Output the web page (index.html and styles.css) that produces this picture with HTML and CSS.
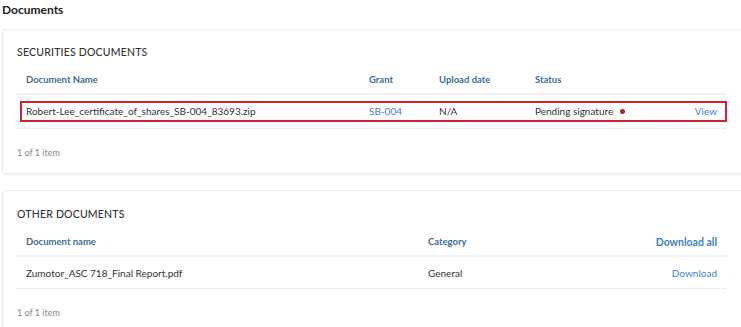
FILE: index.html
```html
<!DOCTYPE html>
<html lang="en">
<head>
    <meta charset="UTF-8">
    <meta name="viewport" content="width=device-width, initial-scale=1.0">
    <title>Documents</title>
    <link rel="stylesheet" href="styles.css">
</head>
<body>
    <div class="page">
        <h1 class="page-title">Documents</h1>

        <section class="card">
            <h2 class="card-title">SECURITIES DOCUMENTS</h2>
            <div class="table securities">
                <div class="row head">
                    <div class="cell">Document Name</div>
                    <div class="cell">Grant</div>
                    <div class="cell">Upload date</div>
                    <div class="cell">Status</div>
                    <div class="cell"></div>
                </div>
                <div class="row-wrap">
                    <div class="row body highlight">
                        <div class="cell">Robert-Lee_certificate_of_shares_SB-004_83693.zip</div>
                        <div class="cell"><a href="#" class="link">SB-004</a></div>
                        <div class="cell">N/A</div>
                        <div class="cell">Pending signature <span class="dot"></span></div>
                        <div class="cell right"><a href="#" class="link">View</a></div>
                    </div>
                </div>
            </div>
            <div class="pager">1 of 1 item</div>
        </section>

        <section class="card second">
            <h2 class="card-title">OTHER DOCUMENTS</h2>
            <div class="table other">
                <div class="row head">
                    <div class="cell">Document name</div>
                    <div class="cell">Category</div>
                    <div class="cell right"><a href="#" class="head-link">Download all</a></div>
                </div>
                <div class="row-wrap">
                    <div class="row body">
                        <div class="cell">Zumotor_ASC 718_Final Report.pdf</div>
                        <div class="cell">General</div>
                        <div class="cell right"><a href="#" class="link">Download</a></div>
                    </div>
                </div>
            </div>
            <div class="pager">1 of 1 item</div>
        </section>
    </div>
</body>
</html>
```

FILE: styles.css
```css
body{
    margin: 0px;
    padding: 0px;
    background-color: #ffffff;
    font-family: Lato, "Open Sans", sans-serif;
    color: #333333;
    overflow: hidden;
}
.page{
    padding: 3px 0px 0px 2px;
}
.page-title{
    margin: 0px;
    font-size: 12px;
    line-height: 14px;
    font-weight: 700;
    color: #222222;
}
.card{
    margin: 12px -6px 0px 0px;
    border: 1px solid #ececec;
    border-radius: 3px;
    box-shadow: 0px 2px 3px rgba(0, 0, 0, 0.04);
    padding: 15px 20px 14px 14px;
    background-color: #ffffff;
}
.card.second{
    margin-top: 16px;
    padding-top: 16px;
}
.card-title{
    margin: 0px;
    font-size: 10.5px;
    line-height: 14px;
    font-weight: 500;
    color: #333333;
    letter-spacing: 0.2px;
}
.table{
    margin-top: 8px;
}
.row{
    display: grid;
    align-items: center;
}
.securities .row{
    grid-template-columns: 343px 70px 96px 1fr auto;
}
.securities .row.highlight{
    grid-template-columns: 338px 70px 96px 1fr auto;
}
.other .row{
    grid-template-columns: 402px 1fr auto;
}
.cell{
    padding: 0px 9px;
    font-size: 10px;
    line-height: 12px;
    white-space: nowrap;
}
.right{
    text-align: right;
}
.head{
    height: 26px;
    border-bottom: 2px solid #f1f1f1;
}
.head .cell{
    font-size: 9.5px;
    font-weight: 700;
    color: #3d6e92;
}
.row-wrap{
    border-bottom: 1px dotted #dcdcdc;
}
.body{
    height: 31px;
}
.highlight{
    box-sizing: border-box;
    height: 21px;
    margin: 6px -1px 6px 3px;
    border: 2px solid #d3222e;
}
.highlight .cell{
    margin-top: -2px;
}
.highlight .cell:first-child{
    padding-left: 4px;
}
.highlight .cell:last-child{
    padding-right: 8px;
}
.link{
    color: #3b86c0;
    text-decoration: none;
}
.head-link{
    font-size: 10.5px;
    color: #3b7fb3;
    text-decoration: none;
}
.dot{
    display: inline-block;
    width: 5px;
    height: 5px;
    border-radius: 50%;
    background-color: #c01c28;
    margin-left: 4px;
    vertical-align: 1px;
}
.pager{
    margin-top: 18px;
    font-size: 9px;
    line-height: 12px;
    color: #888888;
}
```
